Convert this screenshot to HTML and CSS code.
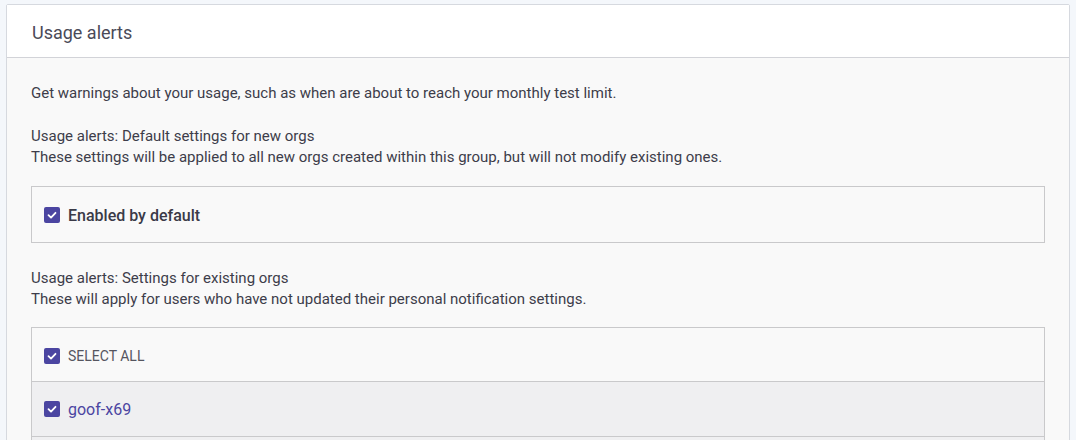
FILE: index.html
```html
<!DOCTYPE html>
<html>
<head>
<meta charset="utf-8">
<link rel="stylesheet" href="styles.css">
</head>
<body>
<div class="card">
  <div class="card-header">Usage alerts</div>
  <div class="card-body">
    <p class="intro">Get warnings about your usage, such as when are about to reach your monthly test limit.</p>
    <p class="section-desc">Usage alerts: Default settings for new orgs<br>These settings will be applied to all new orgs created within this group, but will not modify existing ones.</p>
    <div class="box">
      <label class="check check-bold">
        <span class="cb"><svg viewBox="0 0 16 16" width="16" height="16"><path d="M4.5 8.2 L7 10.6 L11.5 5.8" fill="none" stroke="#fff" stroke-width="1.8" stroke-linecap="round" stroke-linejoin="round"/></svg></span>
        <span>Enabled by default</span>
      </label>
    </div>
    <p class="section-desc section-desc-2">Usage alerts: Settings for existing orgs<br>These will apply for users who have not updated their personal notification settings.</p>
    <div class="list">
      <div class="row row-first">
        <label class="check check-caps">
          <span class="cb"><svg viewBox="0 0 16 16" width="16" height="16"><path d="M4.5 8.2 L7 10.6 L11.5 5.8" fill="none" stroke="#fff" stroke-width="1.8" stroke-linecap="round" stroke-linejoin="round"/></svg></span>
          <span>Select all</span>
        </label>
      </div>
      <div class="row row-alt">
        <label class="check check-link">
          <span class="cb"><svg viewBox="0 0 16 16" width="16" height="16"><path d="M4.5 8.2 L7 10.6 L11.5 5.8" fill="none" stroke="#fff" stroke-width="1.8" stroke-linecap="round" stroke-linejoin="round"/></svg></span>
          <span>goof-x69</span>
        </label>
      </div>
      <div class="row row-alt"></div>
    </div>
  </div>
</div>
</body>
</html>
```

FILE: styles.css
```css
* { box-sizing: border-box; }
html, body { height: 100%; }
body {
  margin: 0;
  padding: 4px 6px 0;
  background: #f4f7fb;
  font-family: Roboto, "Liberation Sans", Arial, sans-serif;
  color: #3d3d4a;
  overflow: hidden;
}
.card {
  border: 1px solid #d6d9df;
  border-radius: 2px;
  background: #f9f9f9;
}
.card-header {
  background: #fff;
  height: 53px;
  border-bottom: 1px solid #d2d3d8;
  padding: 2px 25px 0;
  display: flex;
  align-items: center;
  font-size: 18px;
  color: #4a4a58;
}
.card-body {
  padding: 25px 24px 0;
  font-size: 15px;
  line-height: 21px;
  color: #3d3d4a;
}
.card-body p { margin: 0; }
.card-body .intro { margin-bottom: 22px; }
.card-body .section-desc { margin-bottom: 18px; }
.card-body .section-desc-2 { margin-bottom: 17px; }
.box {
  border: 1px solid #c9c9cb;
  height: 57px;
  padding: 1px 12px 0;
  display: flex;
  align-items: center;
  margin-bottom: 25px;
}
.check {
  display: flex;
  align-items: center;
  gap: 8px;
}
.cb {
  width: 16px;
  height: 16px;
  border-radius: 2px;
  background: #4b45a1;
  display: flex;
}
.check-bold { font-size: 16px; font-weight: 500; color: #3a3a47; }
.check-caps { font-size: 14px; text-transform: uppercase; color: #55555f; }
.check-link { font-size: 16px; color: #4b45a1; }
.list {
  border: 1px solid #c9c9cb;
  border-bottom: none;
}
.row {
  height: 54px;
  padding: 0 12px;
  display: flex;
  align-items: center;
  border-bottom: 1px solid #c9c9cb;
}
.row-first { padding-top: 3px; }
.row-alt { height: 55px; background: #efeff1; }
```
